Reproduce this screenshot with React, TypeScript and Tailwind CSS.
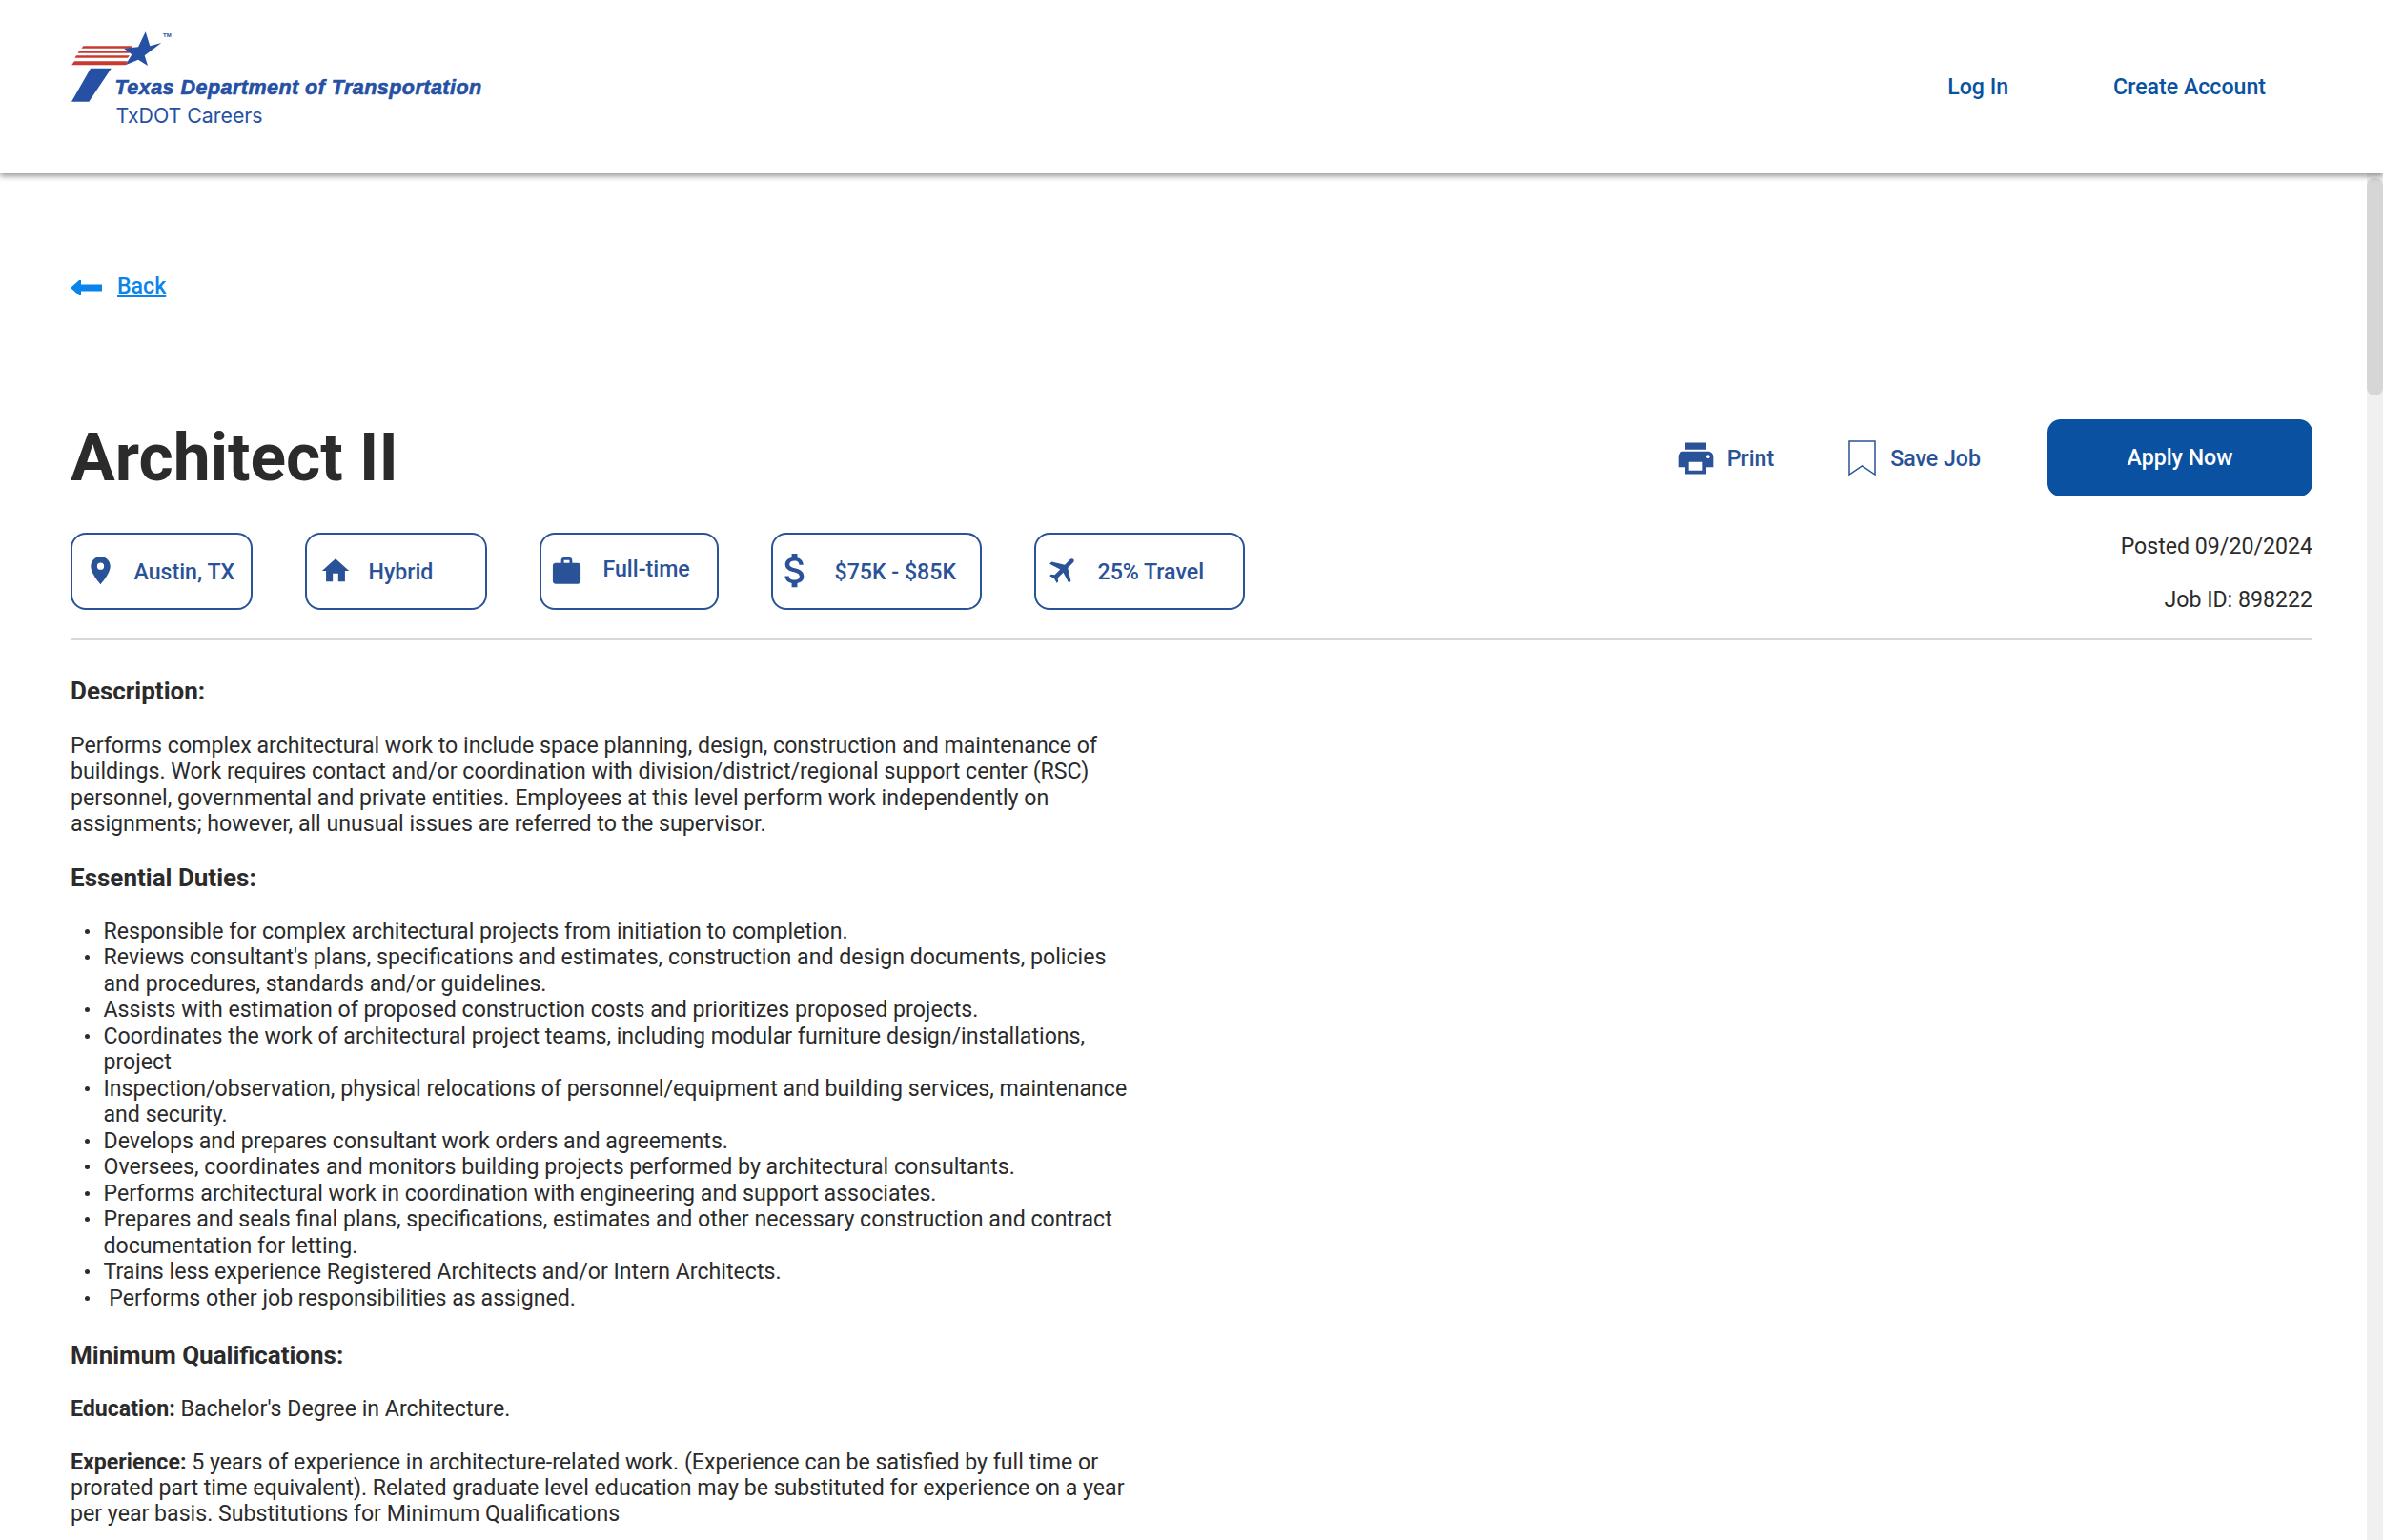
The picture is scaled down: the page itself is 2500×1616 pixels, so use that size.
import React from "react";
import { MdPlace, MdHome, MdWork, MdAttachMoney, MdFlight, MdPrint } from "react-icons/md";

function Logo() {
  return (
    <div className="relative w-[440px] h-[120px]">
      <svg className="absolute left-0 top-0" width="110" height="80" viewBox="0 0 110 80">
        <path d="M13.300 18.300H65L63 20.700H11.500Z" fill="#c8392f" />
        <path d="M9.300 23.300H63.500L61.500 25.700H7.500Z" fill="#c8392f" />
        <path d="M6 28.300H62L60 30.700H4.500Z" fill="#c8392f" />
        <path d="M4 34.300H60L57.700 38.300H1.200Z" fill="#c8392f" />
        <path d="M78.700 3.300L83.300 18.300L95.300 15L77.700 28.300L81 39L71 32.700L57.700 38.300L64.300 27.300L56 20.700L71 19.300Z" fill="#2550a3" />
        <path d="M21 41.700H42.700L19.300 76.700H1Z" fill="#2550a3" />
      </svg>
      <span className="absolute left-[97px] top-[3px] text-[6px] leading-[8px] font-bold text-[#2550a3] font-['Liberation_Sans',sans-serif]">TM</span>
      <p className="absolute left-[46.500px] top-[48.500px] m-0 text-[21.5px] tracking-[0.47px] [-webkit-text-stroke:0.6px_#2550a3] leading-[26px] font-bold italic text-[#2550a3] whitespace-nowrap font-['Liberation_Sans',sans-serif]">Texas Department of Transportation</p>
      <p className="absolute left-[47.500px] top-[78px] m-0 text-[21.3px] leading-[26px] text-[#2550a3] whitespace-nowrap font-['Inter',sans-serif] font-normal">TxDOT Careers</p>
    </div>
  );
}

function Chip({ w, icon, label, up }: { w: string; icon: React.ReactNode; label: string; up?: boolean }) {
  return (
    <div className={`${w} h-[81px] box-border border-2 border-[#2a5298] rounded-[16px] flex items-center text-[#2a5298] font-medium text-[23.15px]`}>
      <span className="w-[64.5px] shrink-0 flex items-center">{icon}</span>
      <span className={up ? "-mt-[3px]" : "pt-[3px]"}>{label}</span>
    </div>
  );
}

const duties = [
  "Responsible for complex architectural projects from initiation to completion.",
  "Reviews consultant's plans, specifications and estimates, construction and design documents, policies and procedures, standards and/or guidelines.",
  "Assists with estimation of proposed construction costs and prioritizes proposed projects.",
  "Coordinates the work of architectural project teams, including modular furniture design/installations, project",
  "Inspection/observation, physical relocations of personnel/equipment and building services, maintenance and security.",
  "Develops and prepares consultant work orders and agreements.",
  "Oversees, coordinates and monitors building projects performed by architectural consultants.",
  "Performs architectural work in coordination with engineering and support associates.",
  "Prepares and seals final plans, specifications, estimates and other necessary construction and contract documentation for letting.",
  "Trains less experience Registered Architects and/or Intern Architects.",
  "\u00a0Performs other job responsibilities as assigned.",
];

export default function App() {
  return (
    <div className="h-[1616px] overflow-hidden flex flex-col bg-white font-['Roboto',sans-serif] text-[#2b2b2b]">
      <header className="relative z-10 h-[182px] shrink-0 bg-white shadow-[0_3px_6px_rgba(0,0,0,0.4)] flex justify-between pl-[74px] pr-[123px]">
        <div className="mt-[30px]"><Logo /></div>
        <nav className="flex items-center gap-[110px] pt-[2px] text-[23.15px] font-medium text-[#0a52a1]">
          <a>Log In</a>
          <a>Create Account</a>
        </nav>
      </header>
      <div className="flex flex-1 min-h-0">
        <main className="flex-1 min-w-0 pl-[74px] pr-[57px] pt-[106px]">
          <div className="flex items-center h-[27px] gap-[16px]">
            <svg width="33" height="16" viewBox="0 0 33 16"><path d="M0 8L9 0H11V4.500H33V11.500H11V16H9Z" fill="#0a84ed" /></svg>
            <a className="text-[23.15px] font-medium text-[#0a84ed] underline decoration-2 underline-offset-2">Back</a>
          </div>
          <div className="mt-[125px] h-[81px] flex items-center justify-between">
            <h1 className="m-0 text-[69.5px] font-bold text-[#2b2b2b] leading-none">Architect II</h1>
            <div className="flex items-center">
              <div className="flex items-center text-[#2a5298] text-[23.15px] font-medium">
                <MdPrint className="w-[44px] h-[44px] mr-[11px]" />
                <span className="pt-[3px]">Print</span>
              </div>
              <div className="flex items-center text-[#2a5298] text-[23.15px] font-medium ml-[78px]">
                <svg width="29" height="37" viewBox="0 0 29 37" className="mr-[15px]"><path d="M1 1H28V36L14.500 27L1 36Z" fill="none" stroke="#2a5298" strokeWidth="1.5" /></svg>
                <span className="pt-[3px]">Save Job</span>
              </div>
              <button className="ml-[70px] w-[278px] h-[81px] pt-[2px] rounded-[14px] bg-[#0a52a1] text-white text-[23.15px] font-medium">Apply Now</button>
            </div>
          </div>
          <div className="mt-[38px] h-[81px] flex justify-between">
            <div className="flex gap-[55px]">
              <Chip w="w-[191px]" icon={<MdPlace className="w-[35px] h-[35px] ml-[12px] -mt-[2px]" />} label="Austin, TX" />
              <Chip w="w-[191px]" icon={<MdHome className="w-[34px] h-[34px] ml-[12.5px] -mt-[2px]" />} label="Hybrid" />
              <Chip w="w-[188px]" icon={<MdWork className="w-[35px] h-[35px] ml-[9px]" />} label="Full-time" up />
              <Chip w="w-[221px]" icon={<MdAttachMoney className="w-[47px] h-[47px] ml-[0px] -mt-[2px]" />} label="$75K - $85K" />
              <Chip w="w-[221px]" icon={<MdFlight className="w-[36px] h-[36px] ml-[11px] -mt-[3px] rotate-45" />} label="25% Travel" />
            </div>
            <div className="text-right pt-[1px] text-[23.15px] leading-[27px]">
              <p className="m-0">Posted 09/20/2024</p>
              <p className="m-0 mt-[29px]">Job ID: 898222</p>
            </div>
          </div>
          <hr className="mt-[30px] border-0 border-t-2 border-[#d8d8d8]" />
          <article className="w-[1120px] text-[23.15px] leading-[27.4px]">
            <h2 className="m-0 mt-[38px] text-[26px] font-bold leading-[30px]">Description:</h2>
            <p className="m-0 mt-[29px]">Performs complex architectural work to include space planning, design, construction and maintenance of buildings. Work requires contact and/or coordination with division/district/regional support center (RSC) personnel, governmental and private entities. Employees at this level perform work independently on assignments; however, all unusual issues are referred to the supervisor.</p>
            <h2 className="m-0 mt-[27px] text-[26px] font-bold leading-[30px]">Essential Duties:</h2>
            <ul className="m-0 mt-[28px] pl-[34.5px] list-none leading-[27.5px]">
              {duties.map((d) => (
                <li key={d} className="relative before:content-[''] before:absolute before:-left-[20px] before:top-[11px] before:w-[5px] before:h-[5px] before:rounded-full before:bg-[#2b2b2b]">{d}</li>
              ))}
            </ul>
            <h2 className="m-0 mt-[31px] text-[26px] font-bold leading-[30px]">Minimum Qualifications:</h2>
            <p className="m-0 mt-[28px]"><b className="font-bold">Education:</b> Bachelor's Degree in Architecture.</p>
            <p className="m-0 mt-[28px]"><b className="font-bold">Experience:</b> 5 years of experience in architecture-related work. (Experience can be satisfied by full time or prorated part time equivalent). Related graduate level education may be substituted for experience on a year per year basis. Substitutions for Minimum Qualifications</p>
          </article>
        </main>
        <div className="w-[17px] shrink-0 bg-[#f0f0f0] pt-[5px]">
          <div className="h-[228px] rounded-[8px] bg-[#d6d6d6]" />
        </div>
      </div>
    </div>
  );
}
